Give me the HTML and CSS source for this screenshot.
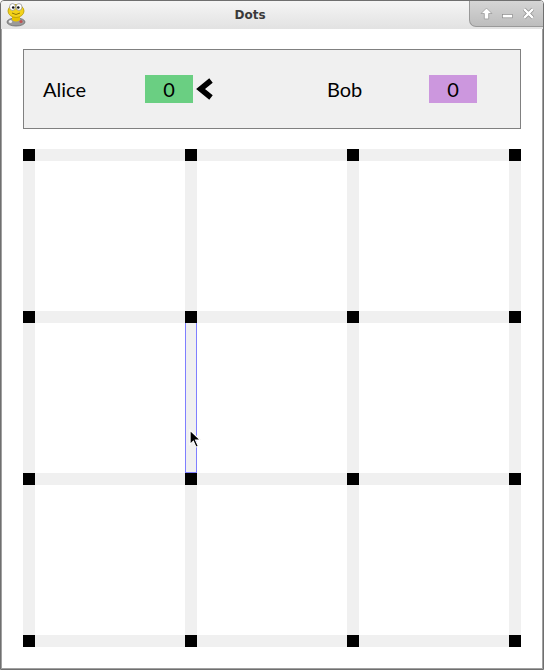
FILE: index.html
```html
<!DOCTYPE html>
<html>
<head>
<meta charset="utf-8">
<link rel="stylesheet" href="styles.css">
</head>
<body>
<div class="window">
  <div class="titlebar">
    <svg class="appicon" width="22" height="25" viewBox="0 0 22 25">
      <ellipse cx="11" cy="20" rx="9" ry="4" fill="#9a9a9a" stroke="#6a6a6a" stroke-width="0.8"/>
      <circle cx="5.5" cy="19.5" r="1.6" fill="#eee"/>
      <circle cx="16" cy="19.5" r="1.6" fill="#c05050"/>
      <path d="M7 13 Q11 18 15 13 L15 18 Q11 21 7 18 Z" fill="#e8c300"/>
      <ellipse cx="11" cy="9" rx="8" ry="6.5" fill="#f3d21a" stroke="#b99a00" stroke-width="0.8"/>
      <ellipse cx="7.5" cy="5" rx="3" ry="3.4" fill="#fff" stroke="#777" stroke-width="0.6"/>
      <ellipse cx="14" cy="5" rx="3" ry="3.4" fill="#fff" stroke="#777" stroke-width="0.6"/>
      <circle cx="8.2" cy="5.5" r="1.3" fill="#111"/>
      <circle cx="13.3" cy="5.5" r="1.3" fill="#111"/>
      <path d="M7 11 Q11 14 15 11" fill="none" stroke="#7a6000" stroke-width="0.8"/>
    </svg>
    <div class="title">Dots</div>
    <div class="buttons">
      <svg width="13" height="13" viewBox="0 0 12 12"><path d="M6 1 L11 6 L8 6 L8 11 L4 11 L4 6 L1 6 Z" fill="#fff" stroke="#8a8a8a" stroke-width="0.6"/></svg>
      <svg width="13" height="13" viewBox="0 0 12 12"><rect x="1.5" y="7" width="9" height="3" fill="#fff" stroke="#8a8a8a" stroke-width="0.6"/></svg>
      <svg width="13" height="13" viewBox="0 0 12 12"><path d="M2 2 L10 10 M10 2 L2 10" stroke="#8a8a8a" stroke-width="3.4"/><path d="M2 2 L10 10 M10 2 L2 10" stroke="#fff" stroke-width="2.2"/></svg>
    </div>
  </div>
  <div class="content">
    <div class="panel">
      <div class="player">Alice</div>
      <div class="score green">0</div>
      <div class="turn">
        <svg width="17" height="22" viewBox="0 0 17 22"><polyline points="15,2.5 4.5,11 15,19.5" fill="none" stroke="#000" stroke-width="5.5"/></svg>
      </div>
      <div class="player bob">Bob</div>
      <div class="score purple">0</div>
    </div>
    <div class="board">
      <div class="d"></div><div class="h"></div><div class="d"></div><div class="h"></div><div class="d"></div><div class="h"></div><div class="d"></div>
      <div class="v"></div><div class="c"></div><div class="v"></div><div class="c"></div><div class="v"></div><div class="c"></div><div class="v"></div>
      <div class="d"></div><div class="h"></div><div class="d"></div><div class="h"></div><div class="d"></div><div class="h"></div><div class="d"></div>
      <div class="v"></div><div class="c"></div><div class="v hover"></div><div class="c"></div><div class="v"></div><div class="c"></div><div class="v"></div>
      <div class="d"></div><div class="h"></div><div class="d"></div><div class="h"></div><div class="d"></div><div class="h"></div><div class="d"></div>
      <div class="v"></div><div class="c"></div><div class="v"></div><div class="c"></div><div class="v"></div><div class="c"></div><div class="v"></div>
      <div class="d"></div><div class="h"></div><div class="d"></div><div class="h"></div><div class="d"></div><div class="h"></div><div class="d"></div>
      <svg class="cursor" width="13" height="20" viewBox="0 0 12 18"><path d="M1 1 L1 14 L4 11 L6.5 16.5 L8.5 15.5 L6 10 L10.5 10 Z" fill="#000" stroke="#fff" stroke-width="1"/></svg>
    </div>
  </div>
</div>
</body>
</html>
```
FILE: styles.css
```css
html, body { margin: 0; padding: 0; background: #fff; }
.window {
  width: 544px; height: 670px; box-sizing: border-box;
  border: 1px solid #6f6f6f; border-radius: 4px 4px 0 0;
  display: flex; flex-direction: column;
  background: #e6e6e6; overflow: hidden;
}
.titlebar {
  height: 28px; flex: none; position: relative;
  background: linear-gradient(#f5f5f5, #e2e2e2);
  display: flex; align-items: center;
}
.appicon { position: absolute; left: 4px; top: 1px; }
.title {
  position: absolute; left: 0; width: 498px; top: 0; height: 28px;
  text-align: center; line-height: 28px;
  font-family: "DejaVu Sans", sans-serif; font-weight: bold; font-size: 12px; color: #3a3a3a;
}
.buttons {
  position: absolute; right: 0; top: -1px; width: 74px; height: 27px;
  background: linear-gradient(#d6d6d6, #bdbdbd);
  border-left: 1px solid #999; border-bottom: 1px solid #999;
  border-bottom-left-radius: 7px;
  display: flex; align-items: center; justify-content: space-around; padding: 0 4px 0 6px; box-sizing: border-box;
}
.content {
  flex: 1; background: #fff;
  border: 1px solid #a0a0a0; border-top: none;
  padding: 20px 21px 21px;
  display: flex; flex-direction: column; gap: 20px;
}
.panel {
  height: 80px; box-sizing: border-box;
  border: 1px solid #808080; background: #f0f0f0;
  display: flex; align-items: center; padding-left: 19px;
  font-family: Lato, sans-serif; font-size: 20px; color: #000;
}
.player { width: 102px; }
.player.bob { width: 102px; }
.score { width: 48px; height: 28px; line-height: 28px; text-align: center; }
.green { background: #6acf82; }
.purple { background: #cc97de; }
.turn { width: 134px; display: flex; align-items: center; }
.turn svg { margin-left: 3px; }
.board {
  position: relative;
  display: grid;
  grid-template-columns: 12px 150px 12px 150px 12px 150px 12px;
  grid-template-rows: 12px 150px 12px 150px 12px 150px 12px;
  width: 498px;
}
.d { background: #000; }
.h, .v { background: #f0f0f0; }
.c { background: #fff; }
.v.hover { box-sizing: border-box; border: 1px solid #7f7fff; border-top: none; }
.cursor { position: absolute; left: 166px; top: 280px; }
```
